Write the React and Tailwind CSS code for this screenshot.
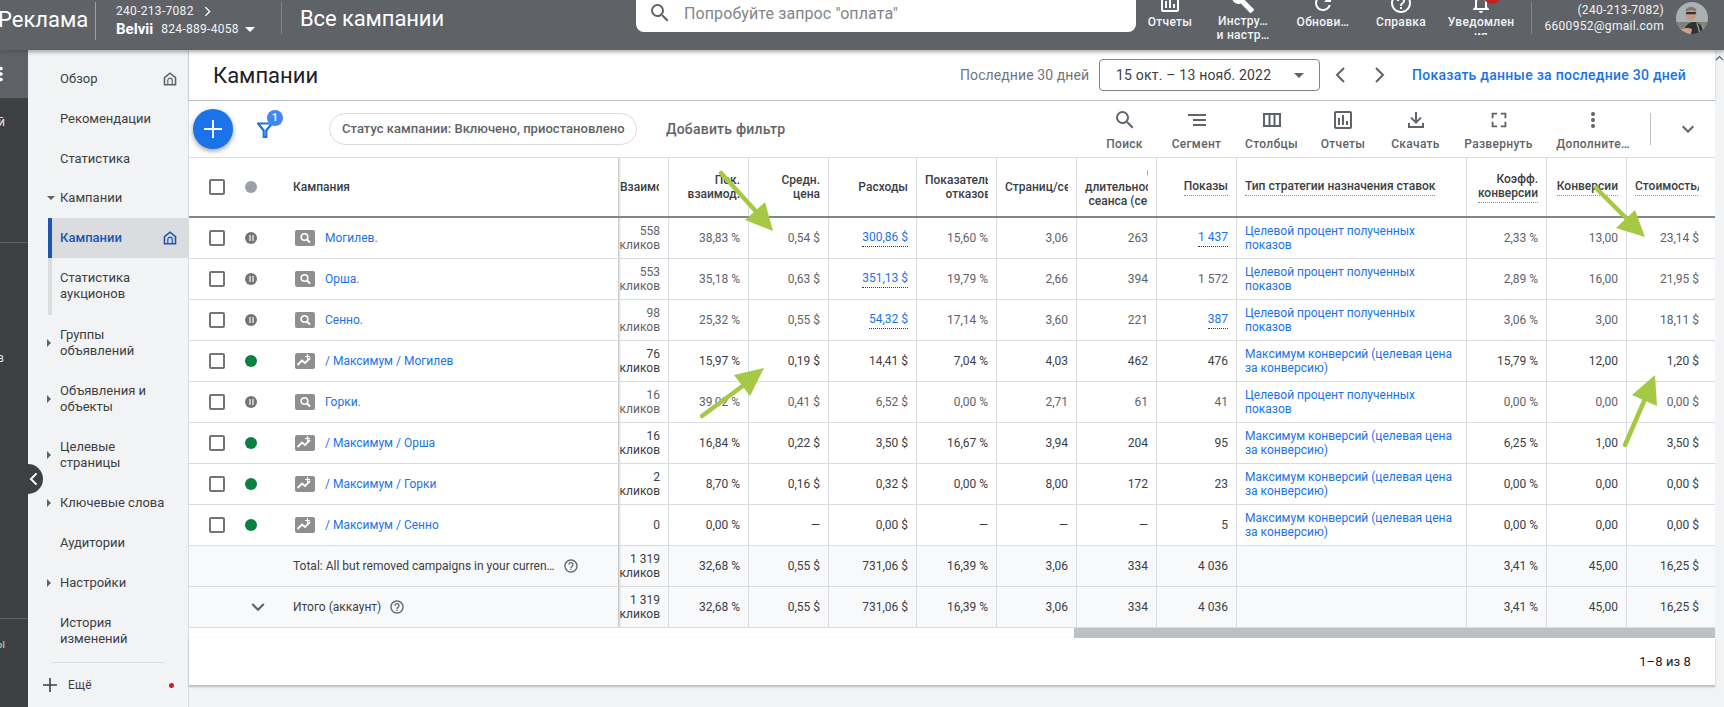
import React from "react";

const P = {
  search: "M15.5 14h-.79l-.28-.27A6.471 6.471 0 0 0 16 9.5 6.5 6.5 0 1 0 9.5 16c1.61 0 3.09-.59 4.23-1.57l.27.28v.79l5 4.99L20.49 19l-4.99-5zm-6 0C7.01 14 5 11.99 5 9.5S7.01 5 9.5 5 14 7.01 14 9.5 11.99 14 9.5 14z",
  chart: "M19 3H5c-1.1 0-2 .9-2 2v14c0 1.1.9 2 2 2h14c1.1 0 2-.9 2-2V5c0-1.1-.9-2-2-2zm0 16H5V5h14v14zM7 10h2v7H7zm4-3h2v10h-2zm4 6h2v4h-2z",
  help: "M11 18h2v-2h-2v2zm1-16C6.48 2 2 6.48 2 12s4.48 10 10 10 10-4.48 10-10S17.52 2 12 2zm0 18c-4.41 0-8-3.59-8-8s3.59-8 8-8 8 3.59 8 8-3.59 8-8 8zm0-14c-2.21 0-4 1.79-4 4h2c0-1.1.9-2 2-2s2 .9 2 2c0 2-3 1.75-3 5h2c0-2.25 3-2.5 3-5 0-2.21-1.79-4-4-4z",
  refresh: "M17.65 6.35A7.958 7.958 0 0 0 12 4c-4.42 0-7.99 3.58-7.99 8s3.57 8 7.99 8c3.73 0 6.84-2.55 7.73-6h-2.08A5.99 5.99 0 0 1 12 18c-3.31 0-6-2.69-6-6s2.69-6 6-6c1.66 0 3.14.69 4.22 1.78L13 11h7V4l-2.35 2.35z",
  bell: "M12 22c1.1 0 2-.9 2-2h-4c0 1.1.9 2 2 2zm6-6v-5c0-3.07-1.63-5.64-4.5-6.32V4c0-.83-.67-1.5-1.5-1.5s-1.5.67-1.5 1.5v.68C7.64 5.36 6 7.92 6 11v5l-2 2v1h16v-1l-2-2zm-2 1H8v-6c0-2.48 1.51-4.5 4-4.5s4 2.02 4 4.5v6z",
  wrench: "M22.7 19l-9.1-9.1c.9-2.3.4-5-1.5-6.9-2-2-5-2.4-7.4-1.3L9 6 6 9 1.6 4.7C.4 7.1.9 10.1 2.9 12.1c1.9 1.9 4.6 2.4 6.9 1.5l9.1 9.1c.4.4 1 .4 1.4 0l2.3-2.3c.5-.4.5-1.1.1-1.4z",
  segment: "M3 6h18v2H3zM8 11h13v2H8zM8 16h13v2H8z",
  cols: "M3 5h18v14H3V5zm2 2v10h3.5V7H5zm5.5 0v10h3V7h-3zm5 0v10H19V7h-3.5z",
  dl: "M11 4h2v8.2l3.3-3.3 1.4 1.4L12 16l-5.7-5.7 1.4-1.4L11 12.2V4zM4 15h2v3h12v-3h2v5H4v-5z",
  expand: "M4 4h6v2H6v4H4V4zm10 0h6v6h-2V6h-4V4zM4 14h2v4h4v2H4v-6zm14 0h2v6h-6v-2h4v-4z",
  more: "M12 8a2 2 0 1 0 0-4 2 2 0 0 0 0 4zm0 2a2 2 0 1 0 0 4 2 2 0 0 0 0-4zm0 6a2 2 0 1 0 0 4 2 2 0 0 0 0-4z",
  down: "M7.41 8.59 12 13.17l4.59-4.58L18 10l-6 6-6-6z",
};

function Ic({ d, className }) {
  return (
    <svg viewBox="0 0 24 24" fill="currentColor" className={className}>
      <path d={d} />
    </svg>
  );
}

function Home({ blue }) {
  return (
    <svg viewBox="0 0 14 14" className="w-[14px] h-[14px]" fill="none" stroke={blue ? "#1a56b0" : "#5f6368"} strokeWidth="1.6">
      <path d="M1.5 12.8V5.6L7 1.2l5.5 4.4v7.2z" />
      <path d="M4.8 12.8V8.4a2.2 2.2 0 0 1 4.4 0v4.4" strokeWidth="1.2" />
    </svg>
  );
}

function Tri({ open }) {
  return open ? (
    <span className="w-0 h-0 border-x-[4px] border-x-transparent border-t-[4px] border-t-[#5f6368]" />
  ) : (
    <span className="w-0 h-0 border-y-[4px] border-y-transparent border-l-[4px] border-l-[#5f6368]" />
  );
}

function NavItem({ h = "h-[40px]", arrow, open, children, right, cls = "" }) {
  return (
    <div className={`${h} ${cls} flex items-center relative`}>
      <span className="w-[20px] shrink-0 pl-[19px] flex items-center">{arrow ? <Tri open={open} /> : null}</span>
      <span className="w-[32px] shrink-0 -ml-[20px]" />
      <span className="text-[13px] leading-[16px] text-[#3c4043]">{children}</span>
      {right ? <span className="ml-auto mr-[11px] flex">{right}</span> : null}
    </div>
  );
}

function Sidebar() {
  return (
    <div className="w-[161px] shrink-0 bg-[#f1f3f4] border-r border-[#dadce0] pt-[9px] h-[657px] flex flex-col">
      <NavItem right={<Home />}>Обзор</NavItem>
      <NavItem>Рекомендации</NavItem>
      <NavItem>Статистика</NavItem>
      <NavItem arrow open>Кампании</NavItem>
      <div className="flex h-[40px] bg-[#dadce0] ml-[20px] items-center border-l-4 border-[#1a56b0] pl-[8px]">
        <span className="text-[13px] text-[#1a56b0] font-medium">Кампании</span>
        <span className="ml-auto mr-[11px] flex"><Home blue /></span>
      </div>
      <div className="flex h-[57px] ml-[20px] items-center border-l-4 border-[#dadce0] pl-[8px] text-[13px] leading-[16px] text-[#3c4043]">
        Статистика<br />аукционов
      </div>
      <NavItem h="h-[56px]" arrow>Группы<br />объявлений</NavItem>
      <NavItem h="h-[57px]" arrow>Объявления и<br />объекты</NavItem>
      <NavItem h="h-[56px]" arrow>Целевые<br />страницы</NavItem>
      <NavItem arrow>Ключевые слова</NavItem>
      <NavItem>Аудитории</NavItem>
      <NavItem arrow>Настройки</NavItem>
      <NavItem h="h-[57px]">История<br />изменений</NavItem>
      <div className="mx-[24px] mt-[3px] border-t border-[#dadce0]" />
      <div className="flex items-center h-[44px] pl-[15px] pr-[14px]">
        <svg viewBox="0 0 14 14" className="w-[14px] h-[14px]" fill="#3c4043"><path d="M6.2 0h1.6v6.2H14v1.6H7.8V14H6.2V7.8H0V6.2h6.2z" /></svg>
        <span className="ml-[11px] text-[12px] tracking-[0.2px] text-[#3c4043]">Ещё</span>
        <span className="ml-auto w-[5px] h-[5px] rounded-full bg-[#c5221f]" />
      </div>
    </div>
  );
}

function Rail() {
  return (
    <div className="w-[28px] shrink-0 bg-[#3c4043] flex flex-col overflow-hidden text-white text-[12px] leading-[14px] h-[657px]">
      <div className="h-[48px] bg-[#5f6368] flex items-center">
        <Ic d={P.more} className="w-[22px] h-[22px] -ml-[10px] text-white" />
      </div>
      <div className="h-[145px] border-b border-[#5f6368] pt-[17px] text-[#e8eaed]"><span className="block -ml-[2px]">й</span></div>
      <div className="h-[376px] border-b border-[#5f6368] pt-[108px] text-[#e8eaed]"><span className="block -ml-[3px]">в</span></div>
      <div className="pt-[18px] text-[#bdc1c6]"><span className="block -ml-[4px]">ы</span></div>
    </div>
  );
}

function TopAction({ w, d, label, label2, mt, clip, badge }) {
  return (
    <div className={`${w} shrink-0 flex flex-col items-center relative`}>
      <div className={`${mt} h-[24px] relative`}>
        <Ic d={d} className="w-[24px] h-[24px] text-white" />
        {badge ? <span className="absolute left-[14px] -top-[5px] w-[18px] h-[18px] rounded-full bg-[#c5221f]" /> : null}
      </div>
      <div className={`text-[12px] leading-[14px] font-medium tracking-[0.3px] text-[#f1f3f4] text-center whitespace-nowrap ${clip ? "h-[20px] overflow-hidden" : ""}`}>
        {label}{label2 ? <><br />{label2}</> : null}
      </div>
    </div>
  );
}

function TopBar() {
  return (
    <div className="h-[50px] bg-[#5f6368] shadow-[0_2px_4px_rgba(60,64,67,.45)] relative z-10 flex overflow-hidden text-white">
      <div className="w-[98px] shrink-0 h-[38px] flex items-center text-[22px] -ml-[2px] border-r border-[#9aa0a6] mt-[2px] mr-[2px]">
        <span className="-mt-[4px]">Реклама</span>
      </div>
      <div className="w-[184px] shrink-0 pl-[18px] pt-[2px] border-r border-[#80868b] h-[32px] mt-[2px]">
        <div className="flex items-center text-[12px] leading-[14px] tracking-[0.3px] text-[#f1f3f4]">
          240-213-7082
          <svg viewBox="0 0 8 12" className="w-[7px] h-[11px] ml-[10px]" fill="none" stroke="#fff" strokeWidth="1.6"><path d="M1.5 1l5 5-5 5" /></svg>
        </div>
        <div className="flex items-center mt-[3px] leading-[16px]">
          <span className="text-[15px] font-bold">Belvii</span>
          <span className="text-[12px] ml-[8px] tracking-[0.3px] text-[#f1f3f4]">824-889-4058</span>
          <span className="ml-[6px] w-0 h-0 border-x-[5px] border-x-transparent border-t-[5px] border-t-white" />
        </div>
      </div>
      <div className="w-[354px] shrink-0 pl-[18px] text-[22px] leading-[38px] tracking-[-0.1px]">Все кампании</div>
      <div className="w-[500px] shrink-0 h-[32px] bg-white rounded-b-[8px] flex items-center pl-[12px]">
        <Ic d={P.search} className="w-[24px] h-[24px] text-[#5f6368] -mt-[6px]" />
        <span className="ml-[12px] text-[16px] tracking-[0.1px] text-[#80868b] -mt-[5px]">Попробуйте запрос "оплата"</span>
      </div>
      <TopAction w="w-[68px]" d={P.chart} label="Отчеты" mt="-mt-[9px]" />
      <TopAction w="w-[78px]" d={P.wrench} label="Инстру…" label2="и настр…" mt="-mt-[10px]" />
      <TopAction w="w-[82px]" d={P.refresh} label="Обнови…" mt="-mt-[9px]" />
      <TopAction w="w-[74px]" d={P.help} label="Справка" mt="-mt-[9px]" />
      <TopAction w="w-[86px]" d={P.bell} label="Уведомлен" label2="ия" mt="-mt-[9px]" clip badge />
      <div className="ml-[7px] w-px h-[32px] mt-[2px] bg-[#80868b]" />
      <div className="w-[132px] text-right text-[12px] leading-[16px] tracking-[0.3px] pt-[2px] text-[#f1f3f4]">
        <div>(240-213-7082)</div>
        <div>6600952@gmail.com</div>
      </div>
      <svg viewBox="0 0 32 32" className="ml-[12px] mt-[2px] w-[32px] h-[32px] rounded-full">
        <rect width="32" height="32" fill="#a9b1b3" />
        <rect y="20" width="32" height="12" fill="#7d8377" />
        <path d="M7 32c1-8 6-12 11-12s9 4 11 12z" fill="#2e3032" />
        <path d="M21 21l3 11M26 23l2 7" stroke="#9a9e8e" strokeWidth="1.3" />
        <ellipse cx="15" cy="11.5" rx="5.5" ry="7" fill="#c39a80" />
        <path d="M9.5 8.5c1-4 9-5 11 0l-1 1c-3-2-6-2-9 0z" fill="#7d7873" />
        <rect x="10" y="10" width="10" height="2.2" rx="1" fill="#333" />
        <path d="M3 29c4-3 8-4 13-2l-1 5H3z" fill="#c9a48a" />
      </svg>
    </div>
  );
}

function PageHeader() {
  return (
    <div className="h-[51px] bg-white border-b border-[#bdc1c6] shadow-[0_1px_2px_rgba(60,64,67,.3)] flex items-center pl-[24px] relative">
      <span className="text-[22px] text-[#202124] w-[747px]">Кампании</span>
      <span className="text-[14px] tracking-[0.1px] text-[#70757a] w-[139px]">Последние 30 дней</span>
      <div className="w-[221px] h-[32px] border border-[#80868b] rounded-[4px] flex items-center pl-[16px] pr-[15px] text-[14px] tracking-[0.2px] text-[#3c4043]">
        15 окт. – 13 нояб. 2022
        <span className="ml-auto w-0 h-0 border-x-[5px] border-x-transparent border-t-[5px] border-t-[#5f6368]" />
      </div>
      <svg viewBox="0 0 12 18" className="ml-[14px] w-[12px] h-[18px]" fill="none" stroke="#5f6368" strokeWidth="2"><path d="M10 2L3 9l7 7" /></svg>
      <svg viewBox="0 0 12 18" className="ml-[28px] w-[12px] h-[18px]" fill="none" stroke="#5f6368" strokeWidth="2"><path d="M2 2l7 7-7 7" /></svg>
      <span className="ml-[26px] text-[14px] font-medium tracking-[0.27px] text-[#1a73e8] whitespace-nowrap">Показать данные за последние 30 дней</span>
    </div>
  );
}

function ToolAction({ w, d, label, small }) {
  return (
    <div className={`${w} shrink-0 flex flex-col items-center`}>
      <Ic d={d} className={`${small ? "w-[22px] h-[22px] my-px" : "w-[24px] h-[24px]"} text-[#5f6368]`} />
      <span className="mt-[5px] text-[12px] leading-[14px] font-medium tracking-[0.3px] text-[#5f6368] whitespace-nowrap">{label}</span>
    </div>
  );
}

function Toolbar() {
  return (
    <div className="h-[57px] bg-white border-b border-[#dadce0] flex items-center pl-[4px] relative">
      <div className="w-[40px] h-[40px] rounded-full bg-[#1a73e8] shadow-[0_2px_5px_rgba(60,64,67,.5)] flex items-center justify-center">
        <svg viewBox="0 0 18 18" className="w-[18px] h-[18px]" fill="#fff"><path d="M8 0h2v8h8v2h-8v8H8v-8H0V8h8z" /></svg>
      </div>
      <div className="ml-[24px] w-[16px] h-[16px] relative mt-[1px]">
        <svg viewBox="0 0 16 16" className="w-[16px] h-[16px]" fill="none" stroke="#1a73e8" strokeWidth="2.2"><path d="M1 1.5h14L9.3 8.5V15h-2.6V8.5z" /></svg>
        <span className="absolute left-[10px] -top-[12px] w-[16px] h-[16px] rounded-full bg-[#4285f4] text-white text-[11px] leading-[16px] font-medium text-center">1</span>
      </div>
      <div className="ml-[56px] w-[308px] h-[32px] border border-[#dadce0] rounded-full flex items-center pl-[12px] text-[13px] font-medium tracking-[0.03px] text-[#5f6368] whitespace-nowrap">
        Статус кампании: Включено, приостановлено
      </div>
      <span className="ml-[29px] w-[423px] text-[14px] font-medium tracking-[0.22px] text-[#5f6368]">Добавить фильтр</span>
      <ToolAction w="w-[71px]" d={P.search} label="Поиск" />
      <ToolAction w="w-[73px]" d={P.segment} label="Сегмент" />
      <ToolAction w="w-[77px]" d={P.cols} label="Столбцы" />
      <ToolAction w="w-[66px]" d={P.chart} label="Отчеты" />
      <ToolAction w="w-[79px]" d={P.dl} label="Скачать" />
      <ToolAction w="w-[87px]" d={P.expand} label="Развернуть" small />
      <ToolAction w="w-[102px]" d={P.more} label="Дополните…" />
      <div className="ml-[6px] w-px h-[32px] bg-[#bdc1c6]" />
      <Ic d={P.down} className="ml-[25px] w-[24px] h-[24px] text-[#5f6368]" />
    </div>
  );
}

const GRID = "grid grid-cols-[429px_50px_80px_80px_88px_80px_80px_80px_80px_230px_80px_80px_89px]";

function HCell({ children, last, i }) {
  return (
    <div className={`flex flex-col justify-center items-end text-right overflow-hidden pl-[8px] ${last ? "pr-[16px]" : "pr-[8px]"} ${i > 1 ? "border-l border-[#dadce0]" : ""}`}>
      {children}
    </div>
  );
}
function Clip({ children, shift = "", left }) {
  return (
    <div className={`w-full overflow-hidden flex ${left ? "justify-start" : "justify-end"}`}>
      <span className={`whitespace-nowrap shrink-0 ${shift}`}>{children}</span>
    </div>
  );
}
const dot = "border-b border-dotted border-[#6a94d4] pb-[2px]";

function HeaderRow() {
  return (
    <div className={`${GRID} h-[60px] bg-white border-b-2 border-[#80868b] text-[12px] leading-[14px] font-medium text-[#3c4043]`}>
      <div className="flex items-center pl-[20px]">
        <span className="w-[16px] h-[16px] border-2 border-[#757575] rounded-[2px]" />
        <span className="ml-[20px] w-[12px] h-[12px] rounded-full bg-[#9aa0a6]" />
        <span className="ml-[36px]">Кампания</span>
      </div>
      <div className="flex items-center shadow-[inset_3px_0_3px_-2px_rgba(60,64,67,.4)] pl-[2px] pr-[9px] overflow-hidden">
        <Clip left>Взаимодействия</Clip>
      </div>
      <HCell i={2}><div>Пок.</div><div>взаимод.</div></HCell>
      <HCell i={3}><div>Средн.</div><div>цена</div></HCell>
      <HCell i={4}><div>Расходы</div></HCell>
      <HCell i={5}><Clip left>Показатель отказов</Clip><Clip shift="-mr-[3px]">отказов</Clip></HCell>
      <HCell i={6}><Clip left>Страниц/сеанс</Clip></HCell>
      <HCell i={7}><Clip shift="-mr-[3px]">(</Clip><Clip left>длительность</Clip><Clip shift="-mr-[10px]">сеанса (сек)</Clip></HCell>
      <HCell i={8}><span className={dot}>Показы</span></HCell>
      <div className="flex items-center border-l border-[#dadce0] pl-[8px]"><span className={dot}>Тип стратегии назначения ставок</span></div>
      <HCell i={10}><div>Коэфф.</div><span className={dot}>конверсии</span></HCell>
      <HCell i={11}><span className={dot}>Конверсии</span></HCell>
      <div className="flex items-center border-l border-[#dadce0] pl-[8px] pr-[16px] overflow-hidden"><div className="w-full overflow-hidden"><span className={`${dot} whitespace-nowrap inline-block`}>Стоимость/конв.</span></div></div>
    </div>
  );
}

const TARGET = "Целевой процент полученных показов";
const MAXC = "Максимум конверсий (целевая цена за конверсию)";
const rows = [
  { n: "Могилев.", t: "s", c: "558", v: ["38,83 %", "0,54 $", "300,86 $", "15,60 %", "3,06", "263", "1 437"], s: TARGET, e: ["2,33 %", "13,00", "23,14 $"], l: [2, 6] },
  { n: "Орша.", t: "s", c: "553", v: ["35,18 %", "0,63 $", "351,13 $", "19,79 %", "2,66", "394", "1 572"], s: TARGET, e: ["2,89 %", "16,00", "21,95 $"], l: [2] },
  { n: "Сенно.", t: "s", c: "98", v: ["25,32 %", "0,55 $", "54,32 $", "17,14 %", "3,60", "221", "387"], s: TARGET, e: ["3,06 %", "3,00", "18,11 $"], l: [2, 6] },
  { n: "/ Максимум / Могилев", t: "m", c: "76", v: ["15,97 %", "0,19 $", "14,41 $", "7,04 %", "4,03", "462", "476"], s: MAXC, e: ["15,79 %", "12,00", "1,20 $"], l: [] },
  { n: "Горки.", t: "s", c: "16", v: ["39,02 %", "0,41 $", "6,52 $", "0,00 %", "2,71", "61", "41"], s: TARGET, e: ["0,00 %", "0,00", "0,00 $"], l: [] },
  { n: "/ Максимум / Орша", t: "m", c: "16", v: ["16,84 %", "0,22 $", "3,50 $", "16,67 %", "3,94", "204", "95"], s: MAXC, e: ["6,25 %", "1,00", "3,50 $"], l: [] },
  { n: "/ Максимум / Горки", t: "m", c: "2", v: ["8,70 %", "0,16 $", "0,32 $", "0,00 %", "8,00", "172", "23"], s: MAXC, e: ["0,00 %", "0,00", "0,00 $"], l: [] },
  { n: "/ Максимум / Сенно", t: "m", c: "0", v: ["0,00 %", "—", "0,00 $", "—", "—", "—", "5"], s: MAXC, e: ["0,00 %", "0,00", "0,00 $"], l: [], noc: true },
];

function CampIcon({ t }) {
  return (
    <span className="w-[20px] h-[16px] rounded-[2px] bg-[#8f8f8f] flex items-center justify-center shrink-0">
      {t === "s" ? (
        <svg viewBox="0 0 20 16" className="w-[20px] h-[16px]" fill="none" stroke="#fff" strokeWidth="1.6">
          <circle cx="9.5" cy="7" r="3.3" />
          <path d="M12 9.5l3 3" strokeWidth="1.9" />
        </svg>
      ) : (
        <svg viewBox="0 0 20 16" className="w-[20px] h-[16px]" fill="none" stroke="#fff" strokeWidth="1.8">
          <path d="M2.5 12l4.5-4.5 3 2.5 5-5" />
          <path d="M12.5 1v5M10 3.5h5" strokeWidth="1.2" />
        </svg>
      )}
    </span>
  );
}

function VCell({ children, tone, last, first }) {
  return (
    <div className={`flex items-center justify-end text-right ${tone} ${last ? "pr-[16px]" : "pr-[8px]"} ${first ? "" : "border-l border-[#dadce0]"}`}>
      {children}
    </div>
  );
}

function Row({ r }) {
  const paused = r.t === "s";
  const tone = paused ? "text-[#5f6368]" : "text-[#3c4043]";
  return (
    <div className={`${GRID} h-[41px] bg-white border-b border-[#dadce0] text-[12px] leading-[14px]`}>
      <div className="flex items-center pl-[20px]">
        <span className="w-[16px] h-[16px] border-2 border-[#757575] rounded-[2px] shrink-0" />
        {paused ? (
          <span className="ml-[20px] w-[12px] h-[12px] rounded-full bg-[#757575] flex items-center justify-center gap-px shrink-0">
            <span className="w-[2px] h-[6px] bg-[#c4c4c4]" />
            <span className="w-[2px] h-[6px] bg-[#c4c4c4]" />
          </span>
        ) : (
          <span className="ml-[20px] w-[12px] h-[12px] rounded-full bg-[#0b8043] shrink-0" />
        )}
        <span className="ml-[38px]"><CampIcon t={r.t} /></span>
        <span className="ml-[10px] text-[#1a73e8]">{r.n}</span>
      </div>
      <div className={`flex flex-col justify-center items-end pr-[8px] ${tone} shadow-[inset_3px_0_3px_-2px_rgba(60,64,67,.4)]`}>
        <div>{r.c}</div>
        {r.noc ? null : <div>кликов</div>}
      </div>
      {r.v.map((x, i) => (
        <VCell key={i} tone={tone}>
          {r.l.includes(i) ? <span className="text-[#1a73e8] border-b border-dotted border-[#3c4043] pb-[2px]">{x}</span> : x}
        </VCell>
      ))}
      <div className="flex items-center border-l border-[#dadce0] pl-[8px] pr-[8px] text-[#1a73e8]"><span>{r.s}</span></div>
      {r.e.map((x, i) => (
        <VCell key={i} tone={tone} last={i === 2}>{x}</VCell>
      ))}
    </div>
  );
}

function TotalRow({ children }) {
  const tone = "text-[#3c4043]";
  const v = ["32,68 %", "0,55 $", "731,06 $", "16,39 %", "3,06", "334", "4 036"];
  return (
    <div className={`${GRID} h-[41px] bg-[#f8f9fa] border-b border-[#dadce0] text-[12px] leading-[14px]`}>
      {children}
      <div className={`flex flex-col justify-center items-end pr-[8px] ${tone} shadow-[inset_3px_0_3px_-2px_rgba(60,64,67,.4)]`}>
        <div>1 319</div><div>кликов</div>
      </div>
      {v.map((x, i) => <VCell key={i} tone={tone}>{x}</VCell>)}
      <div className="border-l border-[#dadce0]" />
      <VCell tone={tone}>3,41 %</VCell>
      <VCell tone={tone}>45,00</VCell>
      <VCell tone={tone} last>16,25 $</VCell>
    </div>
  );
}

function Table() {
  return (
    <div>
      <HeaderRow />
      {rows.map((r, i) => <Row key={i} r={r} />)}
      <TotalRow>
        <div className="flex items-center pl-[104px] text-[#3c4043]">
          <span className="whitespace-nowrap">Total: All but removed campaigns in your curren…</span>
          <Ic d={P.help} className="ml-[8px] w-[16px] h-[16px] text-[#5f6368]" />
        </div>
      </TotalRow>
      <TotalRow>
        <div className="flex items-center pl-[59px] text-[#3c4043]">
          <Ic d={P.down} className="w-[26px] h-[26px] text-[#5f6368] -ml-[3px]" />
          <span className="ml-[22px]">Итого (аккаунт)</span>
          <Ic d={P.help} className="ml-[8px] w-[16px] h-[16px] text-[#5f6368]" />
        </div>
      </TotalRow>
      <div className="h-[10px] bg-white flex justify-end">
        <div className="w-[641px] bg-[#bdc1c6]" />
      </div>
      <div className="h-[48px] bg-white flex items-center justify-end pr-[24px] text-[13px] tracking-[0.1px] text-[#202124] border-b border-[#bdc1c6] shadow-[0_1px_2px_rgba(60,64,67,.3)]">
        1–8 из 8
      </div>
    </div>
  );
}

function Arrows() {
  const c = "#a5c945";
  return (
    <svg className="absolute inset-0 w-[1724px] h-[707px] pointer-events-none z-20" viewBox="0 0 1724 707">
      <g stroke={c} strokeWidth="4.5" strokeLinecap="round" fill={c}>
        <line x1="721" y1="173" x2="762" y2="218" />
        <line x1="702" y1="416" x2="748" y2="382" />
        <line x1="1596" y1="188" x2="1633" y2="225" />
        <line x1="1625" y1="445" x2="1648" y2="392" />
      </g>
      <g fill={c}>
        <polygon points="773,231 745,220 765,202" />
        <polygon points="764,368 734,375 750,396" />
        <polygon points="1645,237 1616,228 1635,210" />
        <polygon points="1655,375 1632,395 1657,406" />
      </g>
    </svg>
  );
}

export default function App() {
  return (
    <div className="w-[1724px] h-[707px] overflow-hidden relative bg-[#f1f3f4] font-[Roboto,sans-serif]">
      <TopBar />
      <div className="flex">
        <Rail />
        <Sidebar />
        <div className="w-[1526px] shrink-0">
          <PageHeader />
          <Toolbar />
          <Table />
        </div>
        <svg viewBox="0 0 9 6" className="w-[9px] h-[6px] mt-[5px]" fill="none" stroke="#5f6368" strokeWidth="1.2"><path d="M1 5l3.5-3.5L8 5" /></svg>
      </div>
      <button className="absolute left-[28px] top-[464px] w-[15px] h-[30px] rounded-r-full bg-[#3c4043] flex items-center pl-[1px]">
        <svg viewBox="0 0 10 16" className="w-[9px] h-[14px]" fill="none" stroke="#fff" strokeWidth="2.2"><path d="M8.5 1.5L2 8l6.5 6.5" /></svg>
      </button>
      <Arrows />
    </div>
  );
}
